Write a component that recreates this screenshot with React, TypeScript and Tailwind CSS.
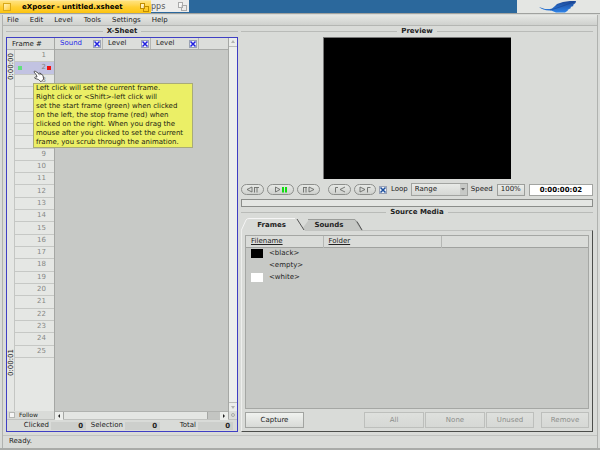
import type { ReactNode } from 'react'

const frames = Array.from({ length: 25 }, (_, i) => i + 1)

const menus = ['File', 'Edit', 'Level', 'Tools', 'Settings', 'Help']

const media = [
    { name: '<black>', swatch: 'bg-black' },
    { name: '<empty>', swatch: '' },
    { name: '<white>', swatch: 'bg-white' },
]

function TabSquares() {
    return (
        <svg width="9" height="9" viewBox="0 0 9 9" fill="none" stroke="currentColor" className="shrink-0">
            <rect x="3.5" y="3.5" width="5" height="5" />
            <rect x="0.5" y="0.5" width="4" height="5" className="fill-white/60" />
        </svg>
    )
}

function GroupTitle({ children }: { children: ReactNode }) {
    return (
        <div className="flex items-center gap-1 h-[11px]">
            <span className="flex-1 h-px bg-[#b9bbb8]" />
            <h2 className="font-bold">{children}</h2>
            <span className="flex-1 h-px bg-[#b9bbb8]" />
        </div>
    )
}

function XCheckbox({ label, color }: { label: string; color: string }) {
    return (
        <span className={`relative block w-[8px] h-[8px] shrink-0 ${color}`}>
            <input
                type="checkbox"
                defaultChecked
                aria-label={label}
                className="block appearance-none w-[8px] h-[8px] border border-[#9aa2b4] bg-[#eef1f6]"
            />
            <svg viewBox="0 0 8 8" className="absolute inset-0 pointer-events-none" stroke="currentColor" strokeWidth="1.5">
                <path d="M1.5 1.5 6.5 6.5M6.5 1.5 1.5 6.5" />
            </svg>
        </span>
    )
}

function Column({ name, className }: { name: string; className: string }) {
    return (
        <div className={`flex items-center justify-between border-r border-[#b4b6b3] pl-[5px] pr-[1px] w-[48px] ${className}`}>
            <span>{name}</span>
            <XCheckbox label={`Show ${name}`} color="text-[#2020e0]" />
        </div>
    )
}

function Transport({ label, width, children }: { label: string; width: string; children: ReactNode }) {
    return (
        <button
            aria-label={label}
            className={`flex items-center justify-center h-[11px] rounded-full border border-[#8d8f8c] bg-linear-to-b from-[#e6e8e5] to-[#cfd1ce] ${width}`}
        >
            <svg width="16" height="7" viewBox="0 0 16 7" fill="none" stroke="#6a6c69" strokeWidth=".9">
                {children}
            </svg>
        </button>
    )
}

function Button({ children, disabled, className }: { children: ReactNode; disabled?: boolean; className: string }) {
    return (
        <button
            disabled={disabled}
            className={`h-[16px] border bg-linear-to-b from-[#f0f2ef] to-[#d8dad7] border-[#a2a4a1] disabled:from-[#dee0dd] disabled:to-[#d6d8d5] disabled:border-[#bdbfbc] disabled:text-[#8c8e8b] ${className}`}
        >
            {children}
        </button>
    )
}

function Total({ label, className }: { label: string; className: string }) {
    return (
        <div className={`flex items-center justify-end gap-[2px] ${className}`}>
            <span>{label}</span>
            <output className="w-[35px] h-[8px] bg-[#cdcfcc] text-right pr-[3px] font-bold leading-[8px]">0</output>
        </div>
    )
}

function Desktop() {
    return (
        <div className="flex h-[13px] bg-[#2b689c] shrink-0">
            <div className="flex items-center w-[151px] h-[13px] bg-linear-to-b from-[#ffe27a] via-[#ffd033] to-[#fcc40c] border-t border-[#ffe99a] pl-[3px] pr-[2px] shrink-0">
                <button aria-label="Close" className="w-[8px] h-[8px] border border-[#d9a818] bg-linear-to-br from-[#fff3b5] to-[#ffcb20]" />
                <h1 className="flex-1 pl-[11px] font-bold text-black">eXposer - untitled.xsheet</h1>
                <button aria-label="Zoom" className="text-[#c08d00]"><TabSquares /></button>
            </div>
            <div className="flex items-center justify-between w-[38px] h-[12px] bg-[#ececeb] pr-[2px] text-[#555] overflow-hidden">
                <span className="text-[8px]">pps</span>
                <span className="text-[#aaa]"><TabSquares /></span>
            </div>
            <div className="flex-1" />
            {/* deskbar */}
            <div className="w-[83px] h-[13px] bg-[#e4e6e3] pl-[22px] overflow-hidden">
                <svg width="38" height="13" viewBox="0 0 38 13">
                    <defs>
                        <linearGradient id="feather" x1="0" y1="0" x2="0" y2="1">
                            <stop offset="0" stopColor="#1c4796" />
                            <stop offset="1" stopColor="#2d83e8" />
                        </linearGradient>
                    </defs>
                    <path d="M37 1 31 1 24 2 18 4 16 6 13 8.500 11 9 6 9 0 7C3 9.500 7 11 12 10.500L17 12.500H26L29 10.500 28.500 10 32 8 31.500 7 34.500 6 34 5 36.500 3Z" fill="url(#feather)" />
                    <path d="M11 10C19 8 26 5 35 2" stroke="#163c84" strokeWidth=".5" fill="none" />
                </svg>
            </div>
        </div>
    )
}

function FrameList() {
    return (
        <div className="flex flex-col w-[48px] shrink-0 bg-[#e5e7e4] border-r border-[#a5a7a4]">
            <div className="h-[12px] bg-[#dcdedb] border-b border-[#b0b2af] pl-[5px] leading-[12px]">Frame #</div>
            <div className="flex flex-1">
                <div className="flex flex-col justify-between w-[8px] border-r border-[#c4c6c3] pt-[3px] pb-[35px] leading-[8px]">
                    <span className="[writing-mode:vertical-rl] rotate-180">0:00:00</span>
                    <span className="[writing-mode:vertical-rl] rotate-180">0:00:01</span>
                </div>
                <ol className="flex flex-col flex-1 h-[308px] text-[#858784]">
                    {frames.map((n) => (
                        <li
                            key={n}
                            className={`flex flex-1 items-center border-b border-[#c6c8c5] px-[3px] ${n === 2 ? 'bg-[#c2c3e2]' : ''}`}
                        >
                            {n === 2 && <span className="w-[4px] h-[4px] bg-[#62e07c]" />}
                            <span className="flex-1 text-right pr-[5px]">{n}</span>
                            {n === 2 ? <span className="w-[4px] h-[4px] -ml-[4px] bg-[#ee1111]" /> : null}
                        </li>
                    ))}
                </ol>
            </div>
            <label className="flex items-center gap-[4px] h-[8px] pl-[2px] bg-[#d9dbd8] text-[6px] leading-[8px]">
                <input type="checkbox" className="appearance-none w-[6px] h-[6px] bg-[#f6f6f6] border border-[#b5b7b4]" />
                Follow
            </label>
        </div>
    )
}

function Arrow({ d, label }: { d: string; label: string }) {
    return (
        <button aria-label={label} className="flex items-center justify-center w-[8px] h-[8px] bg-[#eceeeb] shrink-0">
            <svg width="8" height="8" viewBox="0 0 8 8"><path d={d} fill="currentColor" /></svg>
        </button>
    )
}

function XSheet() {
    return (
        <section className="flex flex-col w-[232px] shrink-0">
            <GroupTitle>X-Sheet</GroupTitle>
            <div className="flex flex-col flex-1 border border-[#3f3fc4] bg-[#d9dbd8]">
                <div className="relative flex flex-1">
                    <FrameList />
                    <div className="flex flex-col flex-1 min-w-0 bg-[#c7c9c6]">
                        <div className="flex h-[12px] bg-[#dcdedb] border-b border-[#a9aba8] shrink-0">
                            <Column name="Sound" className="text-[#2828e8]" />
                            <Column name="Level" className="" />
                            <Column name="Level" className="" />
                        </div>
                        <div className="flex-1" />
                        <div className="flex h-[8px] bg-[#c3c5c2] border-t border-[#b0b2af]">
                            <Arrow label="Scroll left" d="M5 2 3 4 5 6Z" />
                            <div className="w-[144px] border-l border-[#a5a7a4] bg-[#e4e6e3]" />
                            <div className="flex-1 border-l border-[#a5a7a4]" />
                            <Arrow label="Scroll right" d="M3 2 5 4 3 6Z" />
                        </div>
                    </div>
                    <div className="flex flex-col w-[9px] bg-[#edefec] border-l border-[#a5a7a4] text-[#b2b4b1]">
                        <Arrow label="Scroll up" d="M2 5H6L4 2Z" />
                        <div className="flex-1 border-y border-[#bbbdba]" />
                        <Arrow label="Scroll down" d="M2 3H6L4 6Z" />
                        <div className="flex items-center justify-center h-[8px] bg-[#dcdedb]">
                            <span className="w-[4px] h-[4px] border border-[#a9aba8] rounded-full" />
                        </div>
                    </div>
                    <div
                        role="tooltip"
                        className="absolute left-[26px] top-[45px] w-[160px] bg-[#ebef66] border border-[#a9ab78] px-[2px] leading-[9px] text-[#1c1c10]"
                    >
                        Left click will set the current frame.<br />
                        Right click or &lt;Shift&gt;-left click will<br />
                        set the start frame (green) when clicked<br />
                        on the left, the stop frame (red) when<br />
                        clicked on the right. When you drag the<br />
                        mouse after you clicked to set the current<br />
                        frame, you scrub through the animation.
                    </div>
                    <svg className="absolute left-[26px] top-[32px]" width="12" height="13" viewBox="0 0 12 13">
                        <path d="M1 2Q1 .6 2.6 1.4L5.5 3.4 7 3 10 5.5 10.6 9 8 11.8 5.6 9.6 2 8.4Q1 7.4 2.4 7L4 7 3.4 5Z" fill="#fff" stroke="#333" strokeWidth=".8" />
                        <path d="M5.5 3.6 6.5 5.2M7.2 3.4 8.2 5" stroke="#333" strokeWidth=".7" />
                    </svg>
                </div>
                <div className="flex items-center h-[12px] border-t border-[#c1c3c0]">
                    <Total label="Clicked" className="w-[79px]" />
                    <Total label="Selection" className="w-[74px]" />
                    <Total label="Total" className="w-[73px]" />
                </div>
            </div>
        </section>
    )
}

function Preview() {
    return (
        <section>
            <GroupTitle>Preview</GroupTitle>
            <div className="w-[188px] h-[142px] mx-auto bg-black border-t border-l border-[#777]" />
            <div className="flex items-center h-[11px] mt-[5px]">
                <div className="flex gap-[3px]">
                    <Transport label="Previous frame" width="w-[23px]">
                        <path d="M7 1V6L2 3.500ZM9.500 6.500V1.500M12 6.500V1.500M9 1.500H14" />
                    </Transport>
                    <Transport label="Play" width="w-[27px]">
                        <path d="M2.500 1V6L7 3.500Z" />
                        <path d="M10 1V6.500M13 1V6.500" stroke="#12dd12" strokeWidth="2" />
                    </Transport>
                    <Transport label="Next frame" width="w-[23px]">
                        <path d="M2.500 6.500V1.500M5 6.500V1.500M2 1.500H6M8 1V6L13 3.500Z" />
                    </Transport>
                </div>
                <div className="flex gap-[3px] ml-[8px]">
                    <Transport label="First frame" width="w-[23px]">
                        <path d="M3.500 6.500V1.500H6M13 1 8 3.500 13 6" />
                    </Transport>
                    <Transport label="Last frame" width="w-[22px]">
                        <path d="M3 1V6L8 3.500ZM10.500 6.500V1.500H13.500" />
                    </Transport>
                </div>
                <div className="flex items-center gap-[4px] ml-[3px]">
                    <XCheckbox label="Loop" color="text-[#1d4f9c]" />
                    <span>Loop</span>
                </div>
                <div className="relative ml-[3px] w-[57px]">
                    <select
                        aria-label="Playback range"
                        className="block appearance-none w-full h-[13px] pl-[3px] border border-[#a2a4a1] bg-linear-to-b from-[#e8eae7] to-[#d5d7d4] leading-[11px]"
                    >
                        <option>Range</option>
                    </select>
                    <span className="absolute right-px top-px flex items-center justify-center w-[7px] h-[11px] bg-[#c7c9c6] pointer-events-none">
                        <svg width="4" height="3" viewBox="0 0 4 3"><path d="M0 0H4L2 2.5Z" fill="#666" /></svg>
                    </span>
                </div>
                <label htmlFor="speed" className="ml-[3px]">Speed</label>
                <button id="speed" className="ml-[4px] w-[28px] h-[12px] border border-[#9c9e9b] bg-linear-to-b from-[#ebedea] to-[#d6d8d5]">100%</button>
                <input
                    aria-label="Current time"
                    defaultValue="0:00:00:02"
                    className="ml-[4px] flex-1 min-w-0 h-[12px] bg-white border border-[#a2a4a1] text-center font-bold text-black"
                />
            </div>
            <div className="h-[8px] mt-[4px] border border-[#8b8d8a] bg-[#e4e6e3]" />
        </section>
    )
}

function SourceMedia() {
    return (
        <section className="flex flex-col flex-1">
            <GroupTitle>Source Media</GroupTitle>
            <div className="relative flex h-[13px] -mb-px font-bold" role="tablist">
                <svg className="absolute left-0 top-0" width="124" height="13" viewBox="0 0 124 13">
                    <path d="M60 12.500 68 1.500H113Q115.500 1.500 116.500 4L121 12.500Z" fill="#c5c7c4" />
                    <path d="M67 1.500H114L121 12.500" fill="none" stroke="#9b9d9a" />
                    <path d="M116 3.500 121 12" fill="none" stroke="#555" />
                    <path d="M0 13 5 2Q6 .5 8 .5H54Q56 .5 57 2L64 13Z" fill="#d9dbd8" />
                    <path d="M0 13 5 2Q6 .5 8 .5H54" fill="none" stroke="#f5f5f5" />
                    <path d="M56 1 63 12" fill="none" stroke="#555" />
                </svg>
                <button role="tab" aria-selected="true" className="relative w-[61px] pt-px">Frames</button>
                <button role="tab" aria-selected="false" className="relative w-[54px] pt-px">Sounds</button>
            </div>
            <div className="flex flex-col flex-1 border border-t-[#bfc1be] border-l-[#eeefed] border-r-[#4b4d4a] border-b-[#4b4d4a] px-[3px] pt-[4px] pb-[3px]">
                <div className="flex-1 bg-[#c7c9c6] border border-[#a5a7a4]">
                    <table className="w-full table-fixed text-left">
                        <thead>
                            <tr className="h-[11px] bg-[#dadcd9] border-b border-[#a0a29f]">
                                <th className="w-[77px] pl-[5px] p-0 font-normal underline border-r border-[#b5b7b4]">Filename</th>
                                <th className="w-[118px] pl-[5px] p-0 font-normal underline border-r border-[#b5b7b4]">Folder</th>
                                <th className="p-0" />
                            </tr>
                        </thead>
                        <tbody>
                            {media.map((m) => (
                                <tr key={m.name} className="h-[12px]">
                                    <td className="p-0 pl-[5px]">
                                        <div className="flex items-center gap-[6px]">
                                            <span className={`w-[12px] h-[9px] shrink-0 ${m.swatch}`} />
                                            <span>{m.name}</span>
                                        </div>
                                    </td>
                                    <td className="p-0" />
                                    <td className="p-0" />
                                </tr>
                            ))}
                        </tbody>
                    </table>
                </div>
                <div className="flex mt-[3px]">
                    <Button className="w-[59px]">Capture</Button>
                    <div className="flex-1" />
                    <Button disabled className="w-[60px]">All</Button>
                    <Button disabled className="w-[60px] ml-px">None</Button>
                    <Button disabled className="w-[48px] ml-px">Unused</Button>
                    <Button disabled className="w-[48px] ml-[7px]">Remove</Button>
                </div>
            </div>
        </section>
    )
}

export default function App() {
    return (
        <div className="flex flex-col h-screen min-h-[450px] bg-[#d9dbd8] font-['DejaVu_Sans',sans-serif] text-[7px] leading-[9px] text-[#222]">
            <Desktop />
            <div className="flex flex-col flex-1 border-t border-[#a0a29f] border-b-2 border-b-[#a9aba8] px-[2px] pt-px">
                <div className="flex flex-col flex-1 border-x border-[#b0b2af]">
                    <nav className="flex items-center gap-[11px] h-[11px] px-[4px] bg-linear-to-b from-[#e6e8e5] to-[#cfd1ce] border-b border-[#b4b6b3]">
                        {menus.map((m) => (
                            <button key={m}>{m}</button>
                        ))}
                    </nav>
                    <div className="flex flex-1 gap-[3px] pl-[3px] pr-[4px]">
                        <XSheet />
                        <div className="flex flex-col flex-1 min-w-0">
                            <Preview />
                            <SourceMedia />
                        </div>
                    </div>
                    <footer className="h-[13px] mt-[3px] pl-[6px] border-t border-[#c1c3c0] leading-[11px]">Ready.</footer>
                </div>
            </div>
        </div>
    )
}
